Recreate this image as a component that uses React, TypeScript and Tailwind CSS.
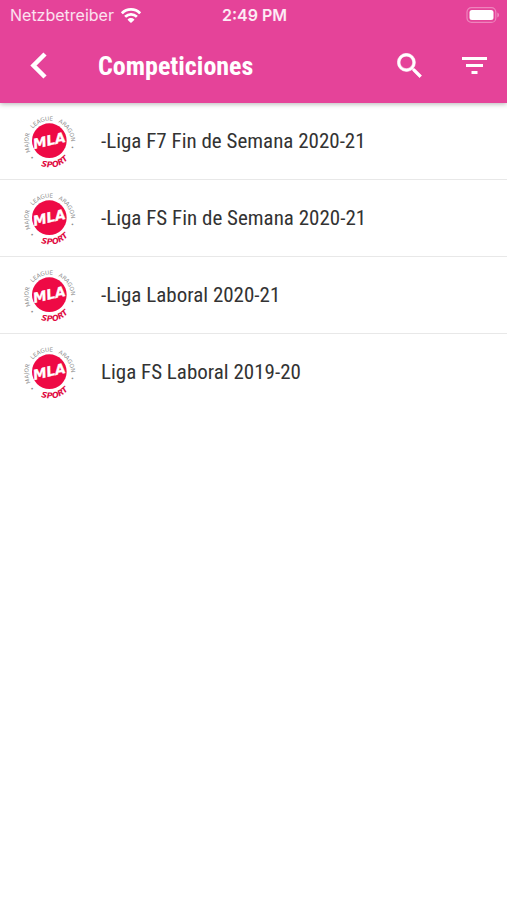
import { useId } from "react";

const leagues = [
  "-Liga F7 Fin de Semana 2020-21",
  "-Liga FS Fin de Semana 2020-21",
  "-Liga Laboral 2020-21",
  "Liga FS Laboral 2019-20",
];

function LeagueLogo() {
  const id = useId();
  return (
    <svg viewBox="0 0 150 156" className="h-[52px] w-[50px] shrink-0 overflow-visible font-['DejaVu_Sans',sans-serif]" aria-hidden="true">
      <defs>
        <path id={`${id}-ring`} d="M 74 145 A 64 64 0 0 1 74 17 A 64 64 0 0 1 74 145" />
        <path id={`${id}-base`} d="M -2 81 A 76 76 0 0 0 150 81" />
      </defs>
      <circle cx="73" cy="77" r="52" fill="#ee0a45" />
      <g transform="rotate(-14 74 81)">
        <text fontSize="17" fill="#8c8c8c">
          <textPath href={`#${id}-ring`} startOffset="50%" textAnchor="middle">
            {"•\u00a0\u00a0MAJOR\u00a0\u00a0\u00a0LEAGUE\u00a0\u00a0\u00a0ARAGON\u00a0\u00a0•"}
          </textPath>
        </text>
        <text fontSize="24" fontWeight="700" fontStyle="italic" fill="#e00b43">
          <textPath href={`#${id}-base`} startOffset="50%" textAnchor="middle">
            SPORT
          </textPath>
        </text>
      </g>
      <text
        x="73"
        y="91"
        fontSize="41"
        fontWeight="700"
        fontStyle="italic"
        fill="#fff"
        stroke="#fff"
        strokeWidth="1"
        textAnchor="middle"
        transform="rotate(-13 73 77)"
      >
        MLA
      </text>
    </svg>
  );
}

function StatusBar() {
  return (
    <div className="grid h-[30px] grid-cols-3 items-center pr-2 pl-2.5 font-['Inter','Liberation_Sans',sans-serif] text-base leading-5">
      <div className="flex items-center gap-[7px] text-white/85">
        <span>Netzbetreiber</span>
        <svg viewBox="0 0 20 15" className="h-[15px] w-5 shrink-0" fill="#fff" aria-label="Wi-Fi">
          <path d="M10 0C6.1 0 2.6 1.5.2 4a.5.5 0 0 0 0 .7l1.3 1.3c.2.2.5.2.7 0A11 11 0 0 1 10 2.8 11 11 0 0 1 17.800 6c.2.2.5.2.7 0l1.300-1.300a.5.5 0 0 0 0-.7C17.400 1.500 13.900 0 10 0z" />
          <path d="M10 5a9.300 9.300 0 0 0-6.500 2.600.5.5 0 0 0 0 .7l1.300 1.300c.2.2.5.2.7 0A6.500 6.500 0 0 1 10 7.800c1.800 0 3.400.7 4.500 1.800.2.2.5.2.7 0l1.300-1.300a.5.5 0 0 0 0-.7A9.300 9.300 0 0 0 10 5z" />
          <path d="M10 9.900c-1.300 0-2.400.5-3.200 1.300a.5.5 0 0 0 0 .7l2.800 2.800c.2.2.5.2.7 0l2.900-2.800a.5.5 0 0 0 0-.7A4.600 4.600 0 0 0 10 9.900z" />
        </svg>
      </div>
      <time className="text-center font-semibold text-white/90">2:49 PM</time>
      <svg viewBox="0 0 33 16" className="h-4 w-[33px] justify-self-end" aria-label="Battery full">
        <rect x="1" y="0.600" width="28.800" height="14.800" rx="4.500" fill="none" stroke="#fff" strokeOpacity="0.35" strokeWidth="1.200" />
        <rect x="3.500" y="3" width="24" height="10" rx="2.500" fill="#fff" />
        <path d="M31.400 5.500v5c1-.4 1.600-1.400 1.600-2.500s-.6-2.100-1.600-2.500z" fill="#fff" fillOpacity="0.400" />
      </svg>
    </div>
  );
}

export default function App() {
  return (
    <div className="min-h-screen bg-white font-['Roboto_Condensed','Roboto',sans-serif] text-[#333]">
      <header className="bg-[#e54399] pb-0.5 text-white shadow-[0_1px_5px_rgba(0,0,0,0.3)]">
        <StatusBar />
        <div className="flex h-[71px] items-center pr-[15px] pl-[18px]">
          <button type="button" aria-label="Volver" className="flex size-10 items-center justify-center">
            <svg viewBox="0 0 17 27" className="h-[27px] w-[17px]" fill="none" stroke="#fff" strokeWidth="4.500" aria-hidden="true">
              <path d="M15 2 3.500 13.500 15 25" />
            </svg>
          </button>
          <h1 className="ml-10 text-[26px] leading-8 font-bold">Competiciones</h1>
          <button type="button" aria-label="Buscar" className="ml-auto flex size-9 items-center justify-center">
            <svg viewBox="2.750 2.750 18 18" className="size-[25px]" fill="#fff" stroke="#fff" strokeWidth="0.400" aria-hidden="true">
              <path d="M15.500 14h-.79l-.28-.27A6.471 6.471 0 0 0 16 9.500 6.500 6.500 0 1 0 9.500 16c1.610 0 3.090-.59 4.230-1.570l.27.28v.79l5 4.990L20.490 19l-4.990-5zm-6 0C7.010 14 5 11.990 5 9.500S7.010 5 9.500 5 14 7.010 14 9.500 11.990 14 9.500 14z" />
            </svg>
          </button>
          <button type="button" aria-label="Filtrar" className="ml-[29px] flex size-9 items-center justify-center">
            <svg viewBox="0 0 25 17" className="h-[17px] w-[25px]" fill="#fff" aria-hidden="true">
              <path d="M0 0h25v3H0zM4 7h17v3H4zM9.500 14h6v3h-6z" />
            </svg>
          </button>
        </div>
      </header>
      <main>
        <ul className="divide-y divide-[#e8e8e8]">
          {leagues.map((league) => (
            <li key={league}>
              <a href="#" className="flex h-[76px] items-center gap-[26px] pr-4 pl-[25px]">
                <LeagueLogo />
                <span className="text-[21px] leading-6">{league}</span>
              </a>
            </li>
          ))}
        </ul>
      </main>
    </div>
  );
}
